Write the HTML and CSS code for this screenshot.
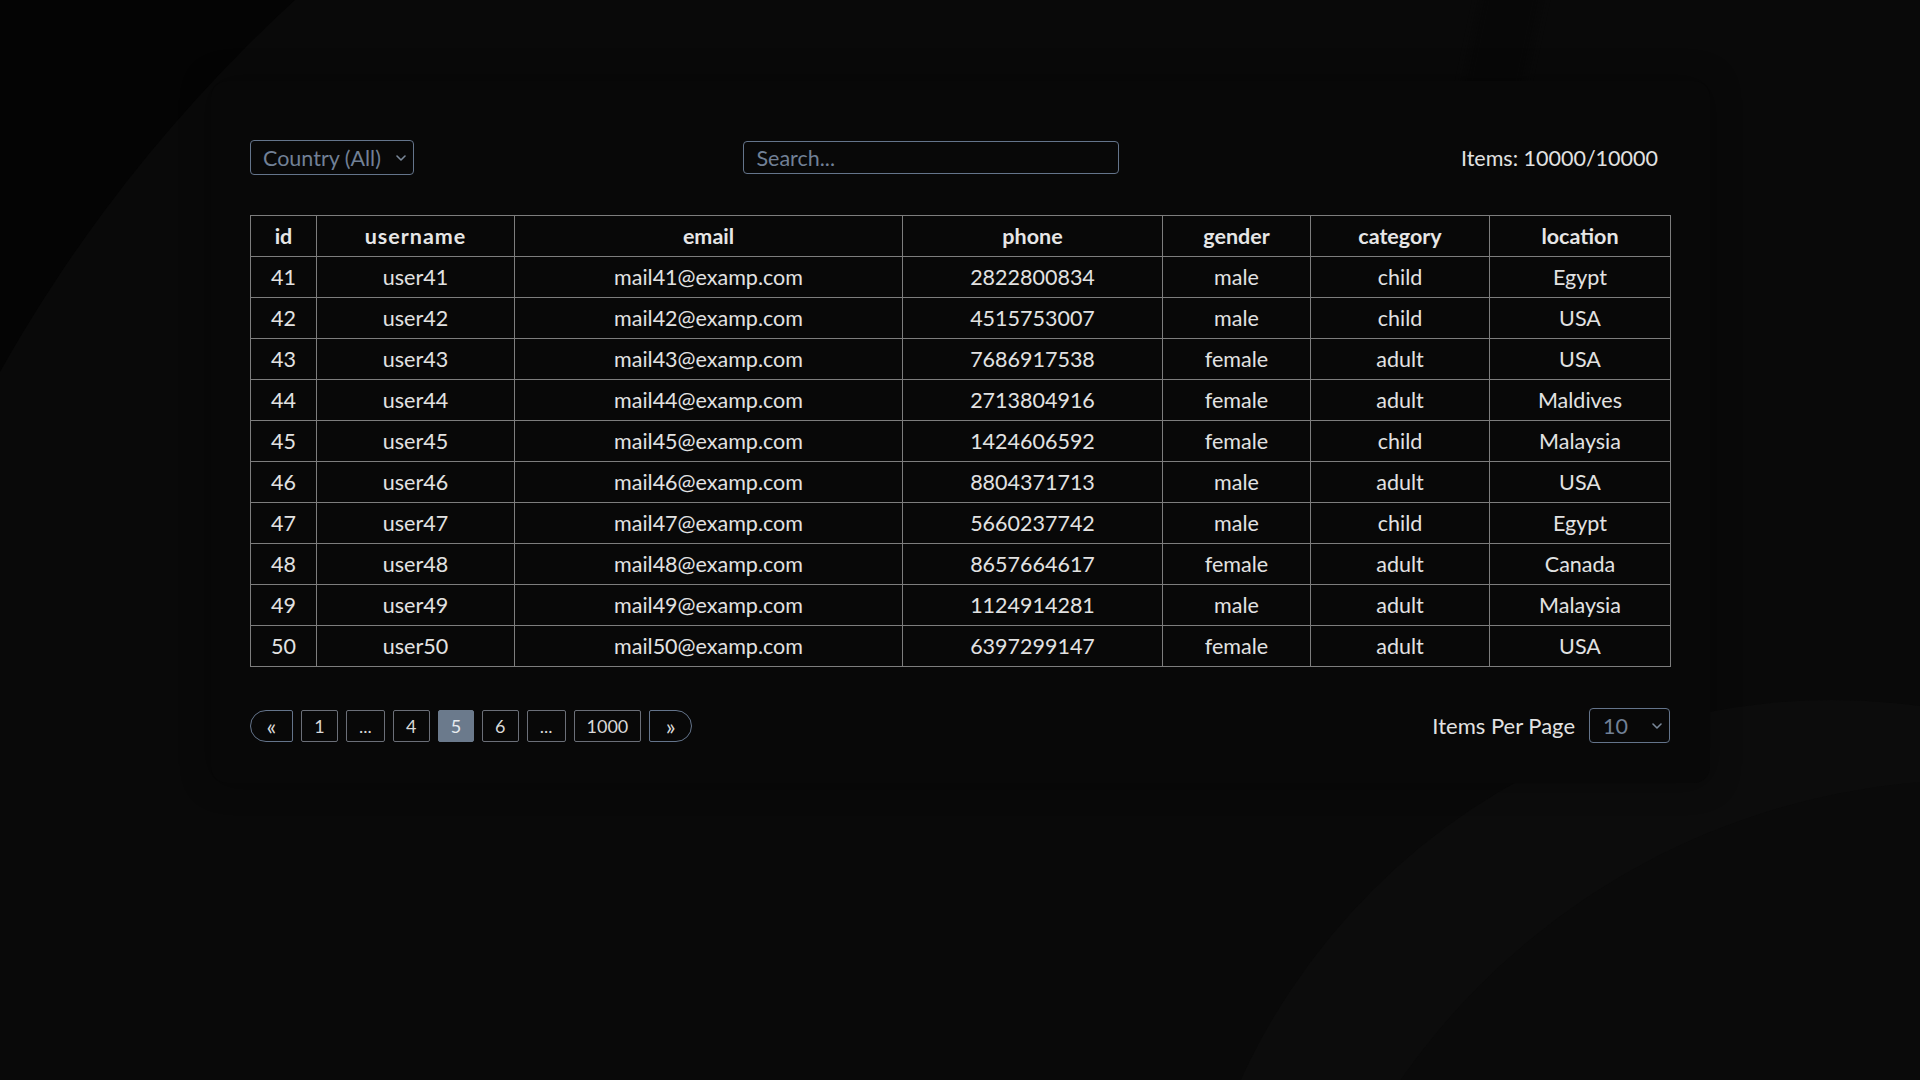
FILE: index.html
```html
<!DOCTYPE html>
<html lang="en">
<head>
<meta charset="utf-8">
<title>Users</title>
<link rel="stylesheet" href="styles.css">
</head>
<body>
<div class="bg">
  <div class="blob blob-a"></div>
  <div class="blob blob-b"></div>
  <div class="blob blob-c"></div>
  <div class="blob blob-e"></div>
</div>
<main class="card">
  <div class="controls">
    <div class="select select-country">
      <span class="select-text">Country (All)</span>
      <svg class="chev" viewBox="0 0 10 6" width="10" height="6"><path d="M1 1l4 4 4-4" fill="none" stroke="currentColor" stroke-width="1.6" stroke-linecap="round" stroke-linejoin="round"/></svg>
    </div>
    <input class="search" type="text" placeholder="Search...">
    <div class="count">Items: 10000/10000</div>
  </div>

  <table class="grid">
    <colgroup>
      <col class="c-id"><col class="c-user"><col class="c-email"><col class="c-phone"><col class="c-gender"><col class="c-cat"><col class="c-loc">
    </colgroup>
    <thead>
      <tr><th>id</th><th class="h-user">username</th><th>email</th><th>phone</th><th>gender</th><th>category</th><th>location</th></tr>
    </thead>
    <tbody>
      <tr><td>41</td><td>user41</td><td>mail41@examp.com</td><td>2822800834</td><td>male</td><td>child</td><td>Egypt</td></tr>
      <tr><td>42</td><td>user42</td><td>mail42@examp.com</td><td>4515753007</td><td>male</td><td>child</td><td>USA</td></tr>
      <tr><td>43</td><td>user43</td><td>mail43@examp.com</td><td>7686917538</td><td>female</td><td>adult</td><td>USA</td></tr>
      <tr><td>44</td><td>user44</td><td>mail44@examp.com</td><td>2713804916</td><td>female</td><td>adult</td><td>Maldives</td></tr>
      <tr><td>45</td><td>user45</td><td>mail45@examp.com</td><td>1424606592</td><td>female</td><td>child</td><td>Malaysia</td></tr>
      <tr><td>46</td><td>user46</td><td>mail46@examp.com</td><td>8804371713</td><td>male</td><td>adult</td><td>USA</td></tr>
      <tr><td>47</td><td>user47</td><td>mail47@examp.com</td><td>5660237742</td><td>male</td><td>child</td><td>Egypt</td></tr>
      <tr><td>48</td><td>user48</td><td>mail48@examp.com</td><td>8657664617</td><td>female</td><td>adult</td><td>Canada</td></tr>
      <tr><td>49</td><td>user49</td><td>mail49@examp.com</td><td>1124914281</td><td>male</td><td>adult</td><td>Malaysia</td></tr>
      <tr><td>50</td><td>user50</td><td>mail50@examp.com</td><td>6397299147</td><td>female</td><td>adult</td><td>USA</td></tr>
    </tbody>
  </table>

  <div class="footer">
    <nav class="pager">
      <button class="pg pg-prev">«</button>
      <button class="pg">1</button>
      <button class="pg">...</button>
      <button class="pg">4</button>
      <button class="pg pg-active">5</button>
      <button class="pg">6</button>
      <button class="pg">...</button>
      <button class="pg">1000</button>
      <button class="pg pg-next">»</button>
    </nav>
    <div class="per-page">
      <span class="per-label">Items Per Page</span>
      <div class="select select-per">
        <span class="select-text">10</span>
        <svg class="chev" viewBox="0 0 10 6" width="10" height="6"><path d="M1 1l4 4 4-4" fill="none" stroke="currentColor" stroke-width="1.6" stroke-linecap="round" stroke-linejoin="round"/></svg>
      </div>
    </div>
  </div>
</main>
</body>
</html>
```

FILE: styles.css
```css
* { box-sizing: border-box; }

html, body {
  margin: 0;
  padding: 0;
  height: 1080px;
  overflow: hidden;
}

body {
  background: #040404;
  font-family: Lato, "Noto Sans", sans-serif;
  color: #e2e2e2;
  position: relative;
}

.bg {
  position: absolute;
  inset: 0;
  overflow: hidden;
  z-index: 0;
}

.blob {
  position: absolute;
  border-radius: 50%;
}

/* large soft shape whose edge runs from the top (x≈300) to the left side (y≈370) */
.blob-a {
  left: -190px;
  top: -390px;
  width: 2980px;
  height: 2980px;
  background: #090909;
}

/* darker narrow band near the top right */
.blob-b {
  left: 1460px;
  top: -200px;
  width: 60px;
  height: 600px;
  background: #070707;
  border-radius: 30px;
  transform: rotate(12deg);
  filter: blur(6px);
}

/* lighter curved shape in the lower right */
.blob-c {
  left: 1182px;
  top: 700px;
  width: 1300px;
  height: 1300px;
  background: #0c0c0c;
}

.blob-e {
  left: 1275px;
  top: 780px;
  width: 1400px;
  height: 1400px;
  background: #0a0a0a;
}

.card {
  position: relative;
  z-index: 1;
  margin: 81px 0 0 211px;
  width: 1499px;
  padding: 59px 40px 40px 39px;
  background: #080808;
  border-radius: 16px;
  box-shadow: 0 0 30px rgba(0, 0, 0, 0.35);
}

.controls {
  display: flex;
  align-items: center;
  justify-content: space-between;
  height: 35px;
}

.select {
  display: flex;
  align-items: center;
  justify-content: space-between;
  border: 1px solid #64748b;
  border-radius: 4px;
  color: #718096;
  font-size: 21.5px;
}

.select-country {
  width: 164px;
  height: 35px;
  padding: 0 7px 0 12px;
}

.select-per {
  width: 81px;
  height: 35px;
  padding: 0 7px 0 13px;
}

.chev {
  display: block;
  color: #7a8899;
}

.search {
  width: 376px;
  height: 33px;
  margin-right: 12px;
  border: 1px solid #64748b;
  border-radius: 4px;
  background: transparent;
  color: #cfd6de;
  font-family: Lato, "Noto Sans", sans-serif;
  font-size: 21.5px;
  padding: 0 12px;
  outline: none;
}

.search::placeholder {
  color: #718096;
}

.count {
  font-size: 21.5px;
  color: #e2e2e2;
  padding-right: 12px;
}

.grid {
  margin-top: 40px;
  width: 1420px;
  table-layout: fixed;
  border-collapse: collapse;
  font-size: 21.5px;
  color: #e2e2e2;
}

.c-id { width: 66px; }
.c-user { width: 198px; }
.c-email { width: 388px; }
.c-phone { width: 260px; }
.c-gender { width: 148px; }
.c-cat { width: 179px; }
.c-loc { width: 181px; }

.grid th,
.grid td {
  border: 1px solid #7d7d7d;
  height: 41px;
  padding: 0 4px;
  text-align: center;
  vertical-align: middle;
  white-space: nowrap;
}

.grid th {
  font-weight: 700;
  color: #e6e6e6;
}

.grid th.h-user {
  letter-spacing: 1px;
}

.footer {
  margin-top: 41px;
  display: flex;
  align-items: center;
  justify-content: space-between;
}

.pager {
  display: flex;
  gap: 8px;
  align-items: center;
}

.pg {
  height: 32px;
  min-width: 37px;
  padding: 0 12px;
  background: transparent;
  border: 1px solid #6b6f78;
  border-radius: 2px;
  color: #d8d8d8;
  font-family: Lato, "Noto Sans", sans-serif;
  font-size: 18px;
  line-height: 30px;
  cursor: pointer;
}

.pg-prev,
.pg-next {
  width: 43px;
  border-color: #64748b;
  font-size: 23px;
  line-height: 28px;
  padding: 0;
}

.pg-prev {
  border-radius: 16px 2px 2px 16px;
}

.pg-next {
  border-radius: 2px 16px 16px 2px;
}

.pg-active {
  width: 36px;
  min-width: 36px;
  background: #6b7a8c;
  border-color: #6b7a8c;
  color: #e8ecf0;
}

.per-page {
  display: flex;
  align-items: center;
  gap: 14px;
}

.per-label {
  font-size: 22px;
  color: #e2e2e2;
}
```
